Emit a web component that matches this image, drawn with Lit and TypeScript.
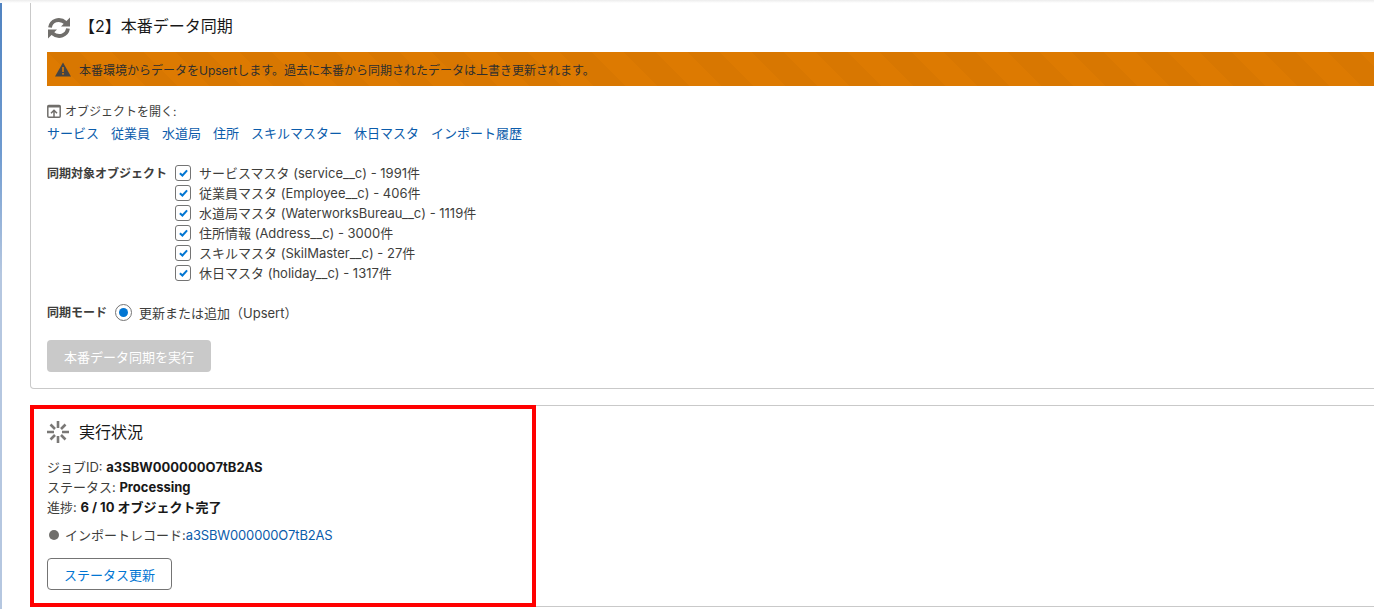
import { LitElement, html, css } from "lit";
import { customElement } from "lit/decorators.js";

@customElement("app-root")
export class AppRoot extends LitElement {
  static styles = css`
    :host {
      display: block;
      width: 1374px;
      height: 609px;
      overflow: hidden;
      position: relative;
      background: #fff;
      font-family: Inter, "Noto Sans CJK JP", sans-serif;
      font-size: 13px;
      color: #3e3e3c;
    }
    .stripe { position: absolute; left: 0; top: 0; bottom: 0; width: 2px; background: linear-gradient(#4f82c0, #6f9bd0 25%, #b5c7e0 45%); }
    .topshade { position: absolute; left: 0; right: 0; top: 0; height: 3px; background: linear-gradient(#ececec, #fff); }
    .page { padding-left: 30px; width: 1460px; box-sizing: border-box; }
    .card { border: 1px solid #c9c9c9; border-top: none; border-radius: 0 0 4px 4px; height: 389px; box-sizing: border-box; padding: 0 16px; }
    .head { display: flex; align-items: center; height: 52px; }
    .head .title { font-size: 16px; color: #181818; margin-left: 8px; line-height: 52px; }
    .refresh { width: 24px; height: 24px; margin-top: 4px; }
    .warn {
      height: 34px; display: flex; align-items: center; gap: 8px; padding-left: 8px;
      background-color: #dd7a01;
      background-image: linear-gradient(45deg, rgba(0,0,0,.025) 25%, transparent 25%, transparent 50%, rgba(0,0,0,.025) 50%, rgba(0,0,0,.025) 75%, transparent 75%, transparent);
      background-size: 64px 64px;
      color: #2e2e2e; font-size: 12px;
    }
    .open { display: flex; align-items: center; gap: 4px; margin-top: 16px; height: 16px; font-size: 12px; }
    .open svg { margin-top: 2px; }
    .links { display: flex; gap: 12px; margin-top: 4px; height: 20px; align-items: center; }
    a { color: #0b5cab; text-decoration: none; }
    .objs { display: flex; margin-top: 20px; }
    .lab { font-weight: 700; width: 128px; font-size: 12px; color: #3e3e3c; line-height: 20px; padding-top: 2px; }
    .list { display: flex; flex-direction: column; }
    .row { display: flex; align-items: center; gap: 8px; height: 20px; }
    .cb { width: 16px; height: 16px; margin-top: 2px; border: 1px solid #747474; border-radius: 3px; box-sizing: border-box; display: flex; align-items: center; justify-content: center; }
    .mode { display: flex; align-items: center; margin-top: 20px; height: 20px; }
    .mode .lab { width: auto; margin-right: 8px; }
    .radio { width: 17px; height: 17px; border: 1px solid #747474; border-radius: 50%; box-sizing: border-box; display: flex; align-items: center; justify-content: center; margin-right: 7px; margin-top: 1px; }
    .radio i { width: 9px; height: 9px; border-radius: 50%; background: #0176d3; display: block; }
    .btn { margin-top: 18px; width: 164px; height: 32px; background: #c9c9c9; color: #fff; border-radius: 4px; display: flex; align-items: center; justify-content: center; font-size: 13px; }
    .second { margin-top: 16px; border-top: 1px solid #c9c9c9; border-bottom: 1px solid #c9c9c9; height: 202px; position: relative; box-sizing: border-box; padding: 0 17px; }
    .highlight { position: absolute; left: 0; top: -1px; width: 506px; height: 202px; border: 4px solid #f00; box-sizing: border-box; }
    .head2 { display: flex; align-items: center; gap: 9px; height: 49px; padding-bottom: 2px; font-size: 16px; color: #181818; }
    .head2 svg { margin-left: -1px; margin-top: 2px; }
    .info { line-height: 20px; }
    .info b { color: #181818; }
    .rec { display: flex; align-items: center; gap: 6px; margin-top: 7px; height: 20px; }
    .rec a { letter-spacing: -0.15px; }
    .dot { width: 10px; height: 10px; border-radius: 50%; background: #706e6b; margin-left: 2px; margin-top: 2px; }
    .btn2 { margin-top: 14px; width: 125px; height: 32px; border: 1px solid #747474; border-radius: 4px; box-sizing: border-box; color: #0176d3; display: flex; align-items: center; justify-content: center; }
  `;

  render() {
    const objects = [
      "サービスマスタ (service__c) - 1991件",
      "従業員マスタ (Employee__c) - 406件",
      "水道局マスタ (WaterworksBureau__c) - 1119件",
      "住所情報 (Address__c) - 3000件",
      "スキルマスタ (SkilMaster__c) - 27件",
      "休日マスタ (holiday__c) - 1317件",
    ];
    const links = ["サービス", "従業員", "水道局", "住所", "スキルマスター", "休日マスタ", "インポート履歴"];
    return html`
      <div class="page">
        <div class="card">
          <div class="head">
            <svg class="refresh" viewBox="0 0 24 24" fill="none" stroke="#706e6b" stroke-width="3.8">
              <path d="M3 11.5 C4 5 12 1 19 7" /><path d="M21 12.5 C20 19 12 23 5 17" />
              <path d="M23 1.5 V10.5 H14 Z" fill="#706e6b" stroke="none" /><path d="M1 22.5 V13.5 H10 Z" fill="#706e6b" stroke="none" />
            </svg>
            <span class="title">【2】本番データ同期</span>
          </div>
          <div class="warn">
            <svg width="16" height="15" viewBox="0 0 16 15"><path d="M8 0.5 L16 14.5 H0 Z" fill="#444" /><rect x="7.2" y="5" width="1.6" height="5" fill="#dd7a01" /><rect x="7.2" y="11" width="1.6" height="1.6" fill="#dd7a01" /></svg>
            <span>本番環境からデータをUpsertします。過去に本番から同期されたデータは上書き更新されます。</span>
          </div>
          <div class="open">
            <svg width="14" height="14" viewBox="0 0 14 14" fill="none" stroke="#706e6b" stroke-width="1.5"><rect x="0.8" y="1.5" width="12.4" height="11.7" rx="1" /><path d="M0.8 2.5 H13.2" stroke-width="2" /><path d="M7 13 V6.5 M4 9.2 L7 6.2 L10 9.2" /></svg>
            <span>オブジェクトを開く:</span>
          </div>
          <div class="links">${links.map((l) => html`<a>${l}</a>`)}</div>
          <div class="objs">
            <div class="lab">同期対象オブジェクト</div>
            <div class="list">
              ${objects.map(
                (o) => html`<div class="row"><span class="cb"><svg width="9" height="8" viewBox="0 0 10 8"><path d="M1 4.2 L3.8 6.8 L9 1" fill="none" stroke="#0176d3" stroke-width="2.2" /></svg></span><span>${o}</span></div>`
              )}
            </div>
          </div>
          <div class="mode">
            <div class="lab">同期モード</div>
            <span class="radio"><i></i></span>
            <span>更新または追加（Upsert）</span>
          </div>
          <div class="btn">本番データ同期を実行</div>
        </div>
        <div class="second">
          <div class="highlight"></div>
          <div class="head2">
            <svg width="24" height="24" viewBox="0 0 24 24" stroke="#7a7876" stroke-width="2.6" stroke-linecap="butt">
              <path d="M12 1 V8 M12 16 V23 M1 12 H8 M16 12 H23 M4.5 4.5 L9 9 M15 15 L19.5 19.5 M19.5 4.5 L15 9 M9 15 L4.5 19.5" />
            </svg>
            <span>実行状況</span>
          </div>
          <div class="info">
            <div>ジョブID: <b>a3SBW000000O7tB2AS</b></div>
            <div>ステータス: <b>Processing</b></div>
            <div>進捗: <b>6 / 10 オブジェクト完了</b></div>
          </div>
          <div class="rec"><span class="dot"></span><span>インポートレコード:<a>a3SBW000000O7tB2AS</a></span></div>
          <div class="btn2">ステータス更新</div>
        </div>
      </div>
      <div class="stripe"></div>
      <div class="topshade"></div>
    `;
  }
}
